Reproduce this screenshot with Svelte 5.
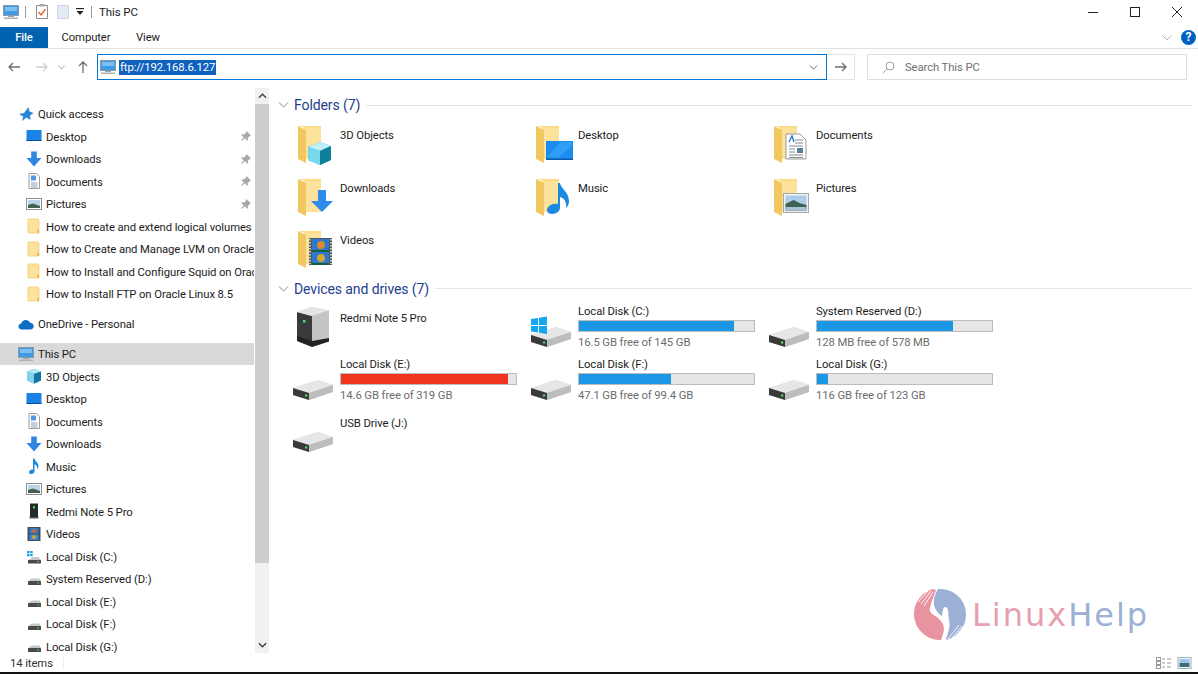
<script>
  const quick = [
    { icon: 'desktop', label: 'Desktop', pin: true },
    { icon: 'down', label: 'Downloads', pin: true },
    { icon: 'doc', label: 'Documents', pin: true },
    { icon: 'pics', label: 'Pictures', pin: true },
    { icon: 'folder', label: 'How to create and extend logical volumes on Oracle' },
    { icon: 'folder', label: 'How to Create and Manage LVM on Oracle Linux' },
    { icon: 'folder', label: 'How to Install and Configure Squid on Oracle Linux' },
    { icon: 'folder', label: 'How to Install FTP on Oracle Linux 8.5' }
  ];
  const pc = [
    { icon: 'cube', label: '3D Objects' },
    { icon: 'desktop', label: 'Desktop' },
    { icon: 'doc', label: 'Documents' },
    { icon: 'down', label: 'Downloads' },
    { icon: 'music', label: 'Music' },
    { icon: 'pics', label: 'Pictures' },
    { icon: 'phone', label: 'Redmi Note 5 Pro' },
    { icon: 'film', label: 'Videos' },
    { icon: 'windrive', label: 'Local Disk (C:)' },
    { icon: 'drive', label: 'System Reserved (D:)' },
    { icon: 'drive', label: 'Local Disk (E:)' },
    { icon: 'drive', label: 'Local Disk (F:)' },
    { icon: 'drive', label: 'Local Disk (G:)' }
  ];
  const folders = [
    { icon: 'cube', label: '3D Objects' },
    { icon: 'desktop', label: 'Desktop' },
    { icon: 'doc', label: 'Documents' },
    { icon: 'down', label: 'Downloads' },
    { icon: 'music', label: 'Music' },
    { icon: 'pics', label: 'Pictures' },
    { icon: 'film', label: 'Videos' }
  ];
  const drives = [
    { icon: 'phone', label: 'Redmi Note 5 Pro' },
    { icon: 'win', label: 'Local Disk (C:)', used: 88.7, free: '16.5 GB free of 145 GB' },
    { icon: 'disk', label: 'System Reserved (D:)', used: 77.8, free: '128 MB free of 578 MB' },
    { icon: 'disk', label: 'Local Disk (E:)', used: 95.4, free: '14.6 GB free of 319 GB', full: true },
    { icon: 'disk', label: 'Local Disk (F:)', used: 52.6, free: '47.1 GB free of 99.4 GB' },
    { icon: 'disk', label: 'Local Disk (G:)', used: 6.2, free: '116 GB free of 123 GB' },
    { icon: 'disk', label: 'USB Drive (J:)' }
  ];
</script>

{#snippet monitor()}
  <svg class="ico" viewBox="0 0 16 16">
    <rect x="0.5" y="1.5" width="15" height="10" fill="#3f9be8" stroke="#8a9aa8" />
    <rect x="2" y="3" width="12" height="4" fill="#7cc0f2" />
    <rect x="5" y="12" width="6" height="1" fill="#9aa5ad" />
    <rect x="1" y="13.5" width="14" height="1.5" fill="#a9b2b8" />
  </svg>
{/snippet}

{#snippet small(k)}
  <svg class="ico" viewBox="0 0 16 16">
    {#if k === 'desktop'}
      <rect x="0.5" y="2" width="15" height="11" fill="#1a82e2" />
      <rect x="0.5" y="12" width="15" height="1" fill="#0b4f96" />
    {:else if k === 'down'}
      <path d="M5.2 0.5h5.6v6.5h4.7L8 15.5 0.5 7h4.7z" fill="#2f86e0" />
    {:else if k === 'doc'}
      <path d="M3 0.5h7.5l3 3v12h-10.500z" fill="#fff" stroke="#9b9b9b" />
      <rect x="5" y="2.500" width="5" height="5" fill="#4a9be0" />
      <path d="M5 10h6.500M5 12h6.500M5 14h6.500" stroke="#8c9aa6" />
    {:else if k === 'pics'}
      <rect x="0.500" y="2.500" width="15" height="11" fill="#fff" stroke="#8f8f8f" />
      <rect x="2" y="4" width="12" height="8" fill="#bcd4ea" />
      <path d="M2 9l5-1.500 7 2.500v2h-12z" fill="#44604f" />
    {:else if k === 'folder'}
      <path d="M2 1h10l1 1v13h-11z" fill="#fce29a" stroke="#eec968" stroke-width="0.700" />
      <rect x="11.500" y="12" width="1.500" height="3" fill="#e0b03c" />
    {:else if k === 'cube'}
      <path d="M8 1l7 2.500v9l-7 3-7-3v-9z" fill="#29a5d6" />
      <path d="M1 3.500l7 2.500 7-2.500-7-2.500z" fill="#b5e8f5" />
      <path d="M1 3.500l7 2.500v9.500l-7-3z" fill="#7fd3ea" />
      <path d="M8 6l7-2.500v9l-7 3z" fill="#16759f" />
    {:else if k === 'music'}
      <path d="M7 0.500h1.500c.5 3 4 4 4 7.500 0 1.500-.5 2.500-1.200 3.500.3-3-1-4.500-2.800-5.200v7c0 1.500-1.500 2.700-3.200 2.700-1.300 0-2.300-.7-2.300-1.800 0-1.500 1.700-2.700 3.300-2.700.3 0 .5 0 .7.100z" fill="#1c8ae0" />
    {:else if k === 'phone'}
      <rect x="4" y="0.500" width="8" height="13.500" fill="#26282a" />
      <rect x="7" y="3" width="2" height="2.500" fill="#3bd06a" />
      <rect x="3.500" y="14" width="9" height="1.500" fill="#555" />
    {:else if k === 'film'}
      <rect x="1.500" y="1" width="13" height="14" fill="#4a4d52" />
      <rect x="3.500" y="2" width="9" height="5.500" fill="#2f7fd0" />
      <rect x="3.500" y="8.500" width="9" height="5.500" fill="#3a86d8" />
      <circle cx="8" cy="5" r="2" fill="#c96a2a" />
      <circle cx="8" cy="11" r="2" fill="#d3a23a" />
    {:else if k === 'windrive'}
      <path d="M1 3h2.500v2.300h-2.500zM4.200 3h2.500v2.300h-2.500zM1 6h2.500v2.300h-2.500zM4.200 6h2.500v2.300h-2.500z" fill="#1aa0ea" />
      <path d="M2.500 12l4-3h6l2.500 3z" fill="#c6c6c6" />
      <rect x="2" y="12" width="13" height="3.500" rx="0.500" fill="#4a4a4a" />
      <rect x="11.500" y="13" width="1.500" height="1" fill="#5cdc6a" />
    {:else if k === 'drive'}
      <path d="M2.500 10l3-2.500h8l1.500 2.500z" fill="#c6c6c6" />
      <rect x="2" y="10" width="13" height="4" rx="0.500" fill="#4a4a4a" />
      <rect x="11.500" y="11.500" width="1.500" height="1" fill="#5cdc6a" />
    {/if}
  </svg>
{/snippet}

{#snippet diskBody()}
  <path d="M1 33l25-8 15 5v7l-24 8-16-5z" fill="#d4d4d4" />
  <path d="M1 33l16 5 24-8-15-5z" fill="#e6e6e6" />
  <path d="M1 33l16 5v7l-16-5z" fill="#3a3a3a" />
  <path d="M17 38l24-8v7l-24 8z" fill="#bdbdbd" />
  <rect x="13" y="39.500" width="2.200" height="2" fill="#4fe06a" />
{/snippet}

{#snippet large(k)}
  <svg class="big" viewBox="0 0 48 48">
    {#if k === 'phone'}
      <path d="M5 10l15-5 17 3.500v31l-17 5.500-15-6z" fill="#c9c9c9" />
      <path d="M5 10l15 4v30l-15-6z" fill="#3a3a3c" />
      <path d="M5 10l15-5 17 3.500-17 5.500z" fill="#e4e4e4" />
      <path d="M20 14l17-5.500v27l-17 3z" fill="#c4c4c4" />
      <path d="M5 34l15 5 17-3v3.500l-17 5.500-15-6z" fill="#232325" />
      <rect x="11" y="18" width="2.500" height="2.500" fill="#4fe06a" />
    {:else if k === 'disk'}
      {@render diskBody()}
    {:else if k === 'win'}
      {@render diskBody()}
      <path d="M1 17l7-1v7h-7zM9 15.800l8-1.300v8.500h-8zM1 24h7v6.500l-7-1zM9 24h8v8l-8-1.200z" fill="#12a7ee" />
    {:else}
      <path d="M12 5h17v33h-17z" fill="#fce29a" />
      <path d="M6 5l8 4v33l-8-4z" fill="#f1c860" />
      <path d="M6 5h23v2h-15z" fill="#fbdc86" />
      {#if k === 'cube'}
        <path d="M28 21l11 4v14l-11 5-12-5v-13z" fill="#26a8cf" />
        <path d="M16 26l12-5 11 4-11 5z" fill="#bff0f8" />
        <path d="M16 26l12 4v14l-12-5z" fill="#79d7ea" />
        <path d="M28 30l11-5v14l-11 5z" fill="#0f7f9c" />
      {:else if k === 'desktop'}
        <rect x="16" y="20" width="27" height="19" fill="#1a8cf0" />
        <path d="M17 36l14-15h11v4l-14 12z" fill="#2f9ff6" />
        <rect x="16" y="37.500" width="27" height="1.500" fill="#0d5aa8" />
      {:else if k === 'doc'}
        <path d="M18 13h14l6 6v19h-20z" fill="#fff" stroke="#9a9a9a" />
        <path d="M21 21l3-6 2 6" stroke="#2c7fd0" stroke-width="1.500" fill="none" />
        <path d="M27 19h8M27 22h8M21 25h14M21 34h14M21 36.500h14" stroke="#7c8a96" />
        <rect x="29" y="27" width="6" height="5" fill="#5b7f93" />
        <path d="M21 28h6M21 31h6" stroke="#7c8a96" />
      {:else if k === 'down'}
        <path d="M26 16h8v11h7l-11 11-11-11h7z" fill="#2f8cea" />
      {:else if k === 'music'}
        <path d="M28 9h2c1 6 9 9 9 18 0 3-1 5-3 7 1-6-2-10-6-11v11c0 3-4 6-8 6-3 0-5-1.500-5-4 0-4 6-7 11-6z" fill="#1c8ae0" />
      {:else if k === 'pics'}
        <rect x="15.500" y="19.500" width="25" height="19" fill="#f2f2f2" stroke="#a6a6a6" />
        <rect x="17.500" y="21.500" width="21" height="15" fill="#a9cdea" />
        <path d="M17.500 30l8-4 6 3 7 2v5.500h-21z" fill="#3f6052" />
        <rect x="17.500" y="33" width="21" height="3.500" fill="#a8c4d2" />
      {:else if k === 'film'}
        <rect x="17" y="12" width="23" height="27" fill="#55585c" />
        <path d="M18 13v25M39 13v25" stroke="#e8e8e8" stroke-width="1.500" stroke-dasharray="1.500 1.500" />
        <rect x="20" y="13" width="17" height="12" fill="#2a78d2" />
        <rect x="20" y="26" width="17" height="12" fill="#2a78d2" />
        <circle cx="29" cy="19" r="4" fill="#d98a2a" />
        <circle cx="29" cy="32" r="4" fill="#d8a52e" />
        <path d="M20 25h17M20 38h17" stroke="#1d5d38" stroke-width="2" />
      {/if}
    {/if}
  </svg>
{/snippet}

{#snippet chevron(cls)}
  <svg class={cls} viewBox="0 0 10 6"><path d="M0.500 0.500L5 5l4.500-4.500" fill="none" stroke="currentColor" /></svg>
{/snippet}

{#snippet navRow(item)}
  <div class="row">
    {@render small(item.icon)}
    <span class="label">{item.label}</span>
    {#if item.pin}
      <svg class="pin" viewBox="0 0 12 12"><path d="M6.500 1l4.500 4.500-1.200.6-2 2 .2 2-1 .7-2-2.500L1.500 11 1 10.500l2.800-3.200L1.300 5.300 2 4.300l2 .2 2-2z" fill="#a8a8a8" /></svg>
    {/if}
  </div>
{/snippet}

<div class="window">
  <header class="titlebar">
    <span class="qa-pc">{@render monitor()}</span>
    <i class="sep"></i>
    <svg class="qa-check" viewBox="0 0 12 15"><path d="M0.500 1.500h11v13h-11z" fill="#fff" stroke="#8d8d8d" /><rect x="3.500" y="0" width="5" height="2.500" fill="#aaa" /><path d="M2.500 8l2.500 3 4.500-6" fill="none" stroke="#e2622a" stroke-width="1.300" /></svg>
    <svg class="qa-doc" viewBox="0 0 12 14"><rect x="0.500" y="0.500" width="11" height="13" fill="#e4ebf7" stroke="#cdd7e8" /></svg>
    <svg class="qa-drop" viewBox="0 0 8 7"><rect x="0" y="0" width="8" height="1.200" fill="#222" /><path d="M0.500 3h7L4 7z" fill="#222" /></svg>
    <i class="sep second"></i>
    <span class="title">This PC</span>
    <div class="winbtns">
      <svg viewBox="0 0 10 10"><path d="M0 5.500h10" stroke="#222" /></svg>
      <svg viewBox="0 0 10 10"><rect x="0.500" y="0.500" width="9" height="9" fill="none" stroke="#222" /></svg>
      <svg viewBox="0 0 10 10"><path d="M0 0l10 10M10 0L0 10" stroke="#222" /></svg>
    </div>
  </header>

  <div class="tabs">
    <div class="tab file">File</div>
    <div class="tab computer">Computer</div>
    <div class="tab view">View</div>
    <div class="tabs-right">
      {@render chevron('ribbon-chev')}
      <span class="help">?</span>
    </div>
  </div>

  <div class="addressrow">
    <svg class="nav back" viewBox="0 0 12 10"><path d="M12 5H1M5 1L1 5l4 4" fill="none" stroke="#6e6e6e" stroke-width="1.300" /></svg>
    <svg class="nav fwd" viewBox="0 0 12 10"><path d="M0 5h11M7 1l4 4-4 4" fill="none" stroke="#cfcfcf" stroke-width="1.300" /></svg>
    {@render chevron('nav-chev')}
    <svg class="nav up" viewBox="0 0 10 12"><path d="M5 12V1M1 5l4-4 4 4" fill="none" stroke="#6e6e6e" stroke-width="1.300" /></svg>
    <div class="address">
      <span class="addr-pc">{@render monitor()}</span>
      <span class="selected">ftp://192.168.6.127</span>
      {@render chevron('addr-chev')}
    </div>
    <div class="go">
      <svg viewBox="0 0 12 10"><path d="M0 5h11M7 1l4 4-4 4" fill="none" stroke="#6e6e6e" stroke-width="1.400" /></svg>
    </div>
    <div class="search">
      <svg viewBox="0 0 13 13"><circle cx="8" cy="5" r="4" fill="none" stroke="#a0a0a0" /><path d="M5 8l-4 4" stroke="#a0a0a0" /></svg>
      <span>Search This PC</span>
    </div>
  </div>

  <div class="main">
    <nav class="sidebar">
      <div class="list">
        <div class="row top">
          <svg class="ico" viewBox="0 0 16 16"><path d="M10.500 1l1 4.500L15.500 7l-3.500 2.500.5 4.500-4-2.500L4 15l1.200-4.500L1 8l5-1z" fill="#2a86d8" /></svg>
          <span class="label">Quick access</span>
        </div>
        {#each quick as item}
          {@render navRow(item)}
        {/each}
        <div class="row top gap">
          <svg class="ico" viewBox="0 0 16 16"><path d="M4 13.500c-2 0-3.500-1.200-3.500-3 0-1.600 1.200-2.800 2.800-2.900C3.800 5.400 5.600 4 7.800 4c1.900 0 3.500 1 4.200 2.700 2 0 3.700 1.500 3.700 3.500 0 1.900-1.500 3.300-3.400 3.300z" fill="#0f6cc4" /></svg>
          <span class="label">OneDrive - Personal</span>
        </div>
        <div class="row top gap active">
          {@render monitor()}
          <span class="label">This PC</span>
        </div>
        {#each pc as item}
          {@render navRow(item)}
        {/each}
      </div>
      <div class="scrollbar">
        <div class="sb-btn"><svg viewBox="0 0 10 6"><path d="M1 5l4-4 4 4" fill="none" stroke="#404040" stroke-width="1.500" /></svg></div>
        <div class="thumb"></div>
        <div class="track"></div>
        <div class="sb-btn"><svg viewBox="0 0 10 6"><path d="M1 1l4 4 4-4" fill="none" stroke="#404040" stroke-width="1.500" /></svg></div>
      </div>
    </nav>

    <section class="content">
      <div class="group-head">
        {@render chevron('group-chev')}
        <span>Folders (7)</span>
        <i></i>
      </div>
      <div class="grid folders">
        {#each folders as f}
          <div class="tile">
            {@render large(f.icon)}
            <div class="name plain">{f.label}</div>
          </div>
        {/each}
      </div>

      <div class="group-head">
        {@render chevron('group-chev')}
        <span>Devices and drives (7)</span>
        <i></i>
      </div>
      <div class="grid drives">
        {#each drives as d}
          <div class="tile">
            {@render large(d.icon)}
            {#if d.free}
              <div class="info">
                <div class="name">{d.label}</div>
                <div class="bar"><div class="fill" class:full={d.full} style="width: {d.used}%"></div></div>
                <div class="free">{d.free}</div>
              </div>
            {:else}
              <div class="name device">{d.label}</div>
            {/if}
          </div>
        {/each}
      </div>
    </section>

    <div class="logo">
      <svg viewBox="0 0 52 52">
        <path d="M16 2A26 26 0 0 0 27 52C30 44 32 38 26 32C22 27 14 26 16 20C17 14 20 8 22 2C20 1 18 1 16 2z" fill="#e8939f" />
        <path d="M24 1C40 0 52 12 52 26C52 40 42 50 32 52C33 46 37 40 35 32C34 26 35 21 32 19C28 18 29 25 28 28C22 24 19 18 20 12C20 8 22 5 24 1z" fill="#9cb0d6" />
        <path d="M4 14L14 3M7 16L17 3M10 18L19 4" stroke="#fff" stroke-width="0.900" />
        <path d="M34 51L45 37M38 50L48 38M42 48L50 38" stroke="#fff" stroke-width="0.900" />
      </svg>
      <span class="logo-text"><span class="linux">Linux</span><span class="help-word">Help</span></span>
    </div>
  </div>

  <footer class="status">
    <span class="count">14 items</span>
    <i class="status-sep"></i>
    <div class="views">
      <svg viewBox="0 0 15 12"><rect x="0.500" y="0.500" width="4" height="3" fill="none" stroke="#9a9a9a" /><rect x="0.500" y="4.500" width="4" height="3" fill="none" stroke="#9a9a9a" /><rect x="0.500" y="8.500" width="4" height="3" fill="none" stroke="#9a9a9a" /><path d="M6 2h3M11 2h4M6 6h3M11 6h4M6 10h3M11 10h4" stroke="#9a9a9a" /></svg>
      <svg viewBox="0 0 14 12"><rect x="0.500" y="0.500" width="13" height="11" fill="#f4f8fc" stroke="#9cb0c0" /><rect x="2" y="2" width="10" height="4" fill="#9cc6e8" /><rect x="2" y="6" width="10" height="4" fill="#3f6a7a" /></svg>
    </div>
  </footer>
</div>

<style>
  :global(body) {
    margin: 0;
    background: #fff;
  }
  * {
    box-sizing: border-box;
  }
  .window {
    width: 1198px;
    height: 674px;
    display: flex;
    flex-direction: column;
    overflow: hidden;
    background: #fff;
    border-bottom: 2px solid #111;
    font-family: Roboto, "Noto Sans", sans-serif;
    font-size: 11.3px;
    letter-spacing: -0.1px;
    color: #1c1c1c;
  }
  .ico {
    width: 16px;
    height: 16px;
    flex: none;
    display: block;
  }

  .titlebar {
    height: 23px;
    flex: none;
    display: flex;
    align-items: center;
  }
  .qa-pc {
    margin-left: 3px;
  }
  .sep {
    width: 1px;
    height: 12px;
    background: #9a9a9a;
    margin-left: 6px;
  }
  .sep.second {
    margin-left: 7px;
  }
  .qa-check {
    width: 12px;
    height: 15px;
    margin-left: 10px;
  }
  .qa-doc {
    width: 12px;
    height: 14px;
    margin-left: 9px;
  }
  .qa-drop {
    width: 8px;
    height: 7px;
    margin-left: 7px;
  }
  .title {
    margin-left: 7px;
    font-size: 11.5px;
  }
  .winbtns {
    margin-left: auto;
    margin-right: 16px;
    display: flex;
    gap: 32px;
  }
  .winbtns svg {
    width: 10px;
    height: 10px;
    display: block;
  }

  .tabs {
    height: 26px;
    flex: none;
    display: flex;
    align-items: stretch;
    border-bottom: 1px solid #e2e2e2;
    padding-top: 4px;
  }
  .tab {
    display: flex;
    align-items: center;
    justify-content: center;
  }
  .file {
    width: 48px;
    background: #0063b1;
    color: #fff;
    font-weight: 500;
  }
  .computer {
    width: 76px;
  }
  .view {
    width: 48px;
  }
  .tabs-right {
    margin-left: auto;
    margin-right: 2px;
    display: flex;
    align-items: center;
    gap: 9px;
  }
  :global(.ribbon-chev) {
    width: 10px;
    height: 6px;
    color: #b0b0b0;
  }
  .help {
    width: 15px;
    height: 15px;
    border-radius: 50%;
    background: #0063c4;
    color: #fff;
    font-size: 12px;
    font-weight: 700;
    line-height: 15px;
    text-align: center;
  }

  .addressrow {
    height: 38px;
    flex: none;
    display: flex;
    align-items: flex-start;
    padding-top: 5px;
  }
  .nav {
    width: 12px;
    height: 10px;
    margin-top: 8px;
  }
  .back {
    margin-left: 8px;
  }
  .fwd {
    margin-left: 16px;
  }
  :global(.nav-chev) {
    width: 7px;
    height: 5px;
    margin: 11px 0 0 10px;
    color: #707070;
  }
  .up {
    width: 10px;
    height: 12px;
    margin-left: 13px;
    margin-top: 7px;
  }
  .address {
    width: 730px;
    height: 26px;
    margin-left: 9px;
    border: 1px solid #0078d7;
    display: flex;
    align-items: center;
    padding-left: 2px;
  }
  .selected {
    background: #0f62c0;
    color: #fff;
    margin-left: 3px;
    padding: 0 1px;
    line-height: 15px;
  }
  :global(.addr-chev) {
    width: 9px;
    height: 5px;
    margin-left: auto;
    margin-right: 8px;
    color: #555;
  }
  .go {
    width: 28px;
    height: 26px;
    border: 1px solid #e3e3e3;
    border-left: 0;
    display: flex;
    align-items: center;
    justify-content: center;
  }
  .go svg {
    width: 12px;
    height: 10px;
  }
  .search {
    width: 320px;
    height: 26px;
    margin-left: 12px;
    border: 1px solid #dedede;
    display: flex;
    align-items: center;
    padding-left: 14px;
    color: #6f6f6f;
  }
  .search svg {
    width: 13px;
    height: 13px;
    margin-right: 10px;
  }

  .main {
    flex: 1;
    min-height: 0;
    display: flex;
    position: relative;
  }
  .sidebar {
    width: 270px;
    flex: none;
    display: flex;
    min-height: 0;
    padding-top: 1px;
  }
  .list {
    width: 255px;
    padding-top: 14.5px;
    overflow: hidden;
    flex: none;
  }
  .row {
    height: 22.5px;
    width: 254px;
    display: flex;
    align-items: center;
    padding-left: 26px;
    gap: 4px;
  }
  .row.top {
    padding-left: 18px;
  }
  .row.gap {
    margin-top: 7.5px;
  }
  .row.active {
    background: #d9d9d9;
  }
  .label {
    flex: 1;
    min-width: 0;
    padding-top: 2px;
    white-space: nowrap;
    overflow: hidden;
  }
  .pin {
    width: 12px;
    height: 12px;
    flex: none;
    margin-right: 2px;
  }
  .scrollbar {
    width: 14px;
    flex: none;
    display: flex;
    flex-direction: column;
    background: #f1f1f1;
  }
  .sb-btn {
    height: 16px;
    flex: none;
    display: flex;
    align-items: center;
    justify-content: center;
    background: #f1f1f1;
  }
  .sb-btn svg {
    width: 9px;
    height: 6px;
  }
  .thumb {
    height: 459px;
    flex: none;
    background: #cdcdcd;
  }
  .track {
    flex: 1;
  }

  .content {
    flex: 1;
    padding: 8px 6px 0 8px;
    min-width: 0;
  }
  .group-head {
    height: 18px;
    padding-top: 2px;
    display: flex;
    align-items: center;
    font-size: 14px;
    color: #24408f;
  }
  :global(.group-chev) {
    width: 11px;
    height: 6px;
    margin-right: 5px;
    color: #8a8a8a;
    flex: none;
  }
  .group-head i {
    flex: 1;
    height: 1px;
    background: #e4e4e4;
    margin-left: 6px;
  }
  .grid {
    display: grid;
    grid-template-columns: repeat(3, 238px);
    grid-auto-rows: 52.500px;
    margin-left: 14px;
  }
  .grid.folders {
    margin-top: 8px;
  }
  .grid.drives {
    margin-top: 5.500px;
  }
  .tile {
    display: flex;
    align-items: flex-start;
  }
  .big {
    width: 48px;
    height: 48px;
    flex: none;
    display: block;
  }
  .name {
    line-height: 16px;
    white-space: nowrap;
  }
  .name.plain {
    margin-top: 7px;
  }
  .name.device {
    margin-top: 9px;
  }
  .info {
    margin-top: 2px;
    width: 177px;
  }
  .bar {
    height: 12px;
    margin-top: 0;
    background: #e6e6e6;
    border: 1px solid #bcbcbc;
  }
  .fill {
    height: 100%;
    background: #1c97e6;
  }
  .fill.full {
    background: #ef3420;
  }
  .free {
    margin-top: 2px;
    line-height: 17px;
    color: #6d6d6d;
  }

  .logo {
    position: absolute;
    left: 914px;
    top: 501px;
    display: flex;
    align-items: center;
    gap: 6px;
  }
  .logo svg {
    width: 52px;
    height: 52px;
    display: block;
  }
  .logo-text {
    font-family: "DejaVu Sans", sans-serif;
    font-size: 32px;
    letter-spacing: 2px;
    line-height: 40px;
    margin-top: 1px;
  }
  .linux {
    color: #e7a0ae;
  }
  .help-word {
    color: #9cb0d4;
  }

  .status {
    height: 19px;
    flex: none;
    display: flex;
    align-items: center;
    padding-left: 10px;
    color: #333;
  }
  .count {
    padding-top: 2px;
  }
  .status-sep {
    width: 1px;
    height: 12px;
    background: #ececec;
    margin-left: 10px;
  }
  .views {
    margin-left: auto;
    margin-right: 6px;
    display: flex;
    gap: 6px;
  }
  .views svg {
    width: 15px;
    height: 12px;
    display: block;
  }
</style>
